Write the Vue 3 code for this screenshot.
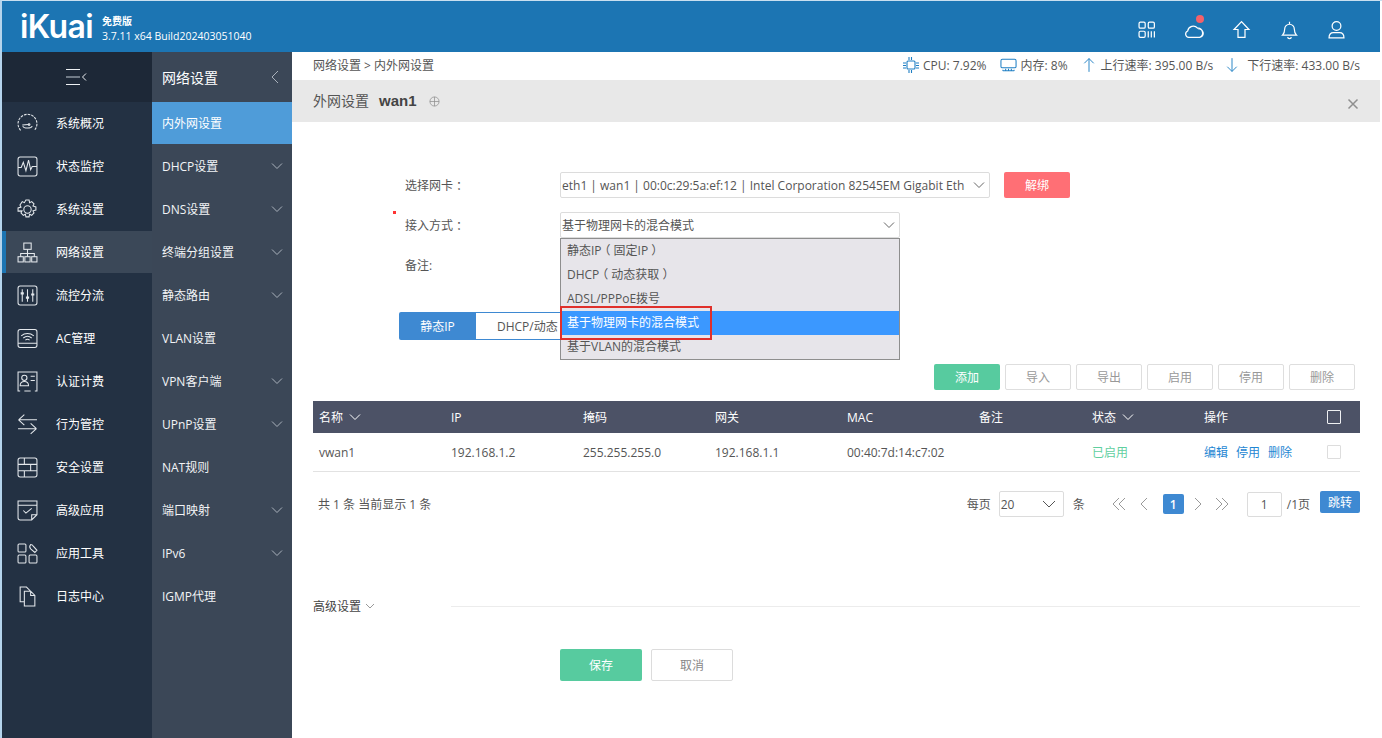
<script setup>
const mainMenu = [
  { t: '系统概况', i: 'gauge' }, { t: '状态监控', i: 'pulse' }, { t: '系统设置', i: 'gear' },
  { t: '网络设置', i: 'net', on: true }, { t: '流控分流', i: 'sliders' }, { t: 'AC管理', i: 'wifi' },
  { t: '认证计费', i: 'card' }, { t: '行为管控', i: 'swap' }, { t: '安全设置', i: 'wall' },
  { t: '高级应用', i: 'note' }, { t: '应用工具', i: 'tools' }, { t: '日志中心', i: 'doc' },
]
const subMenu = [
  { t: '内外网设置', on: true }, { t: 'DHCP设置', c: true }, { t: 'DNS设置', c: true }, { t: '终端分组设置', c: true },
  { t: '静态路由', c: true }, { t: 'VLAN设置' }, { t: 'VPN客户端', c: true }, { t: 'UPnP设置', c: true },
  { t: 'NAT规则' }, { t: '端口映射', c: true }, { t: 'IPv6', c: true }, { t: 'IGMP代理' },
]
const options = ['静态IP（固定IP）', 'DHCP（动态获取）', 'ADSL/PPPoE拨号', '基于物理网卡的混合模式', '基于VLAN的混合模式']
const tools = ['导入', '导出', '启用', '停用', '删除']
const cols = ['IP', '掩码', '网关', 'MAC', '备注']
const cells = ['192.168.1.2', '255.255.255.0', '192.168.1.1', '00:40:7d:14:c7:02', '']
const split = s => s.split(/([（）])/).filter(Boolean)
</script>

<template>
  <div class="frame">
    <header class="top">
      <div class="logo">iKuai</div>
      <div class="ver"><b>免费版</b><span>3.7.11 x64 Build202403051040</span></div>
      <div class="top-icons">
        <svg class="ti" viewBox="0 0 24 24"><rect x="3.500" y="3.500" width="7" height="7" rx="1.500"/><rect x="14" y="3.500" width="7" height="7" rx="1.500"/><rect x="3.500" y="14" width="7" height="7" rx="1.500"/><path d="M14 14v7M17.500 14v7M21 14v7"/></svg>
        <div class="cloud">
          <svg class="ti" viewBox="0 0 24 24"><path d="M5.500 21a3.800 3.800 0 0 1-1.300-7.300A6.500 6.500 0 0 1 15.500 10.500a4 4 0 0 1 .5 0A5.500 5.500 0 0 1 18 21zM16 11a6.500 6.500 0 0 1 6 5 5 5 0 0 1-4 5"/></svg>
          <i class="dot"></i>
        </div>
        <svg class="ti" viewBox="0 0 24 24"><path d="M12 3 3.500 12H8v9h8v-9h4.500z"/></svg>
        <svg class="ti" viewBox="0 0 24 24"><path d="M4 18.500h16c-2-2-2.500-3-2.500-7A5.500 5.500 0 0 0 6.500 11.500c0 4-.5 5-2.500 7zM12 3v3M10 20.500a2 2 0 0 0 4 0"/></svg>
        <svg class="ti" viewBox="0 0 24 24"><circle cx="12" cy="8" r="5"/><path d="M3.500 21.500c0-4 2-6 5-6h7c3 0 5 2 5 6z"/></svg>
      </div>
    </header>
    <div class="body">
      <nav class="nav1">
        <div class="fold">
          <svg width="24" height="18" viewBox="0 0 24 18"><path d="M1 1.500h14M1 16.500h14M21 5.500 17.500 9l3.500 3.500"/><path class="mid" d="M1 9h14"/></svg>
        </div>
        <div v-for="m in mainMenu" :key="m.t" class="n1" :class="{ on: m.on }">
          <svg class="ni" viewBox="0 0 20 20">
            <template v-if="m.i === 'gauge'"><path d="M3.500 16.500a9 9 0 1 1 13 0" stroke-dasharray="2.500 1"/><path d="M5 11.500l6-.5M5.500 12.500c1 2.500 8 2.500 9 0" /><circle cx="11.500" cy="11" r=".8"/></template>
            <template v-else-if="m.i === 'pulse'"><rect x="1" y="1" width="18" height="18" rx="2"/><path d="M1 11h3l2-5 2.500 8L11 4l2 9 1.500-3H19"/></template>
            <template v-else-if="m.i === 'gear'"><circle cx="10" cy="10" r="3.500"/><path d="M8.500 1h3l.5 2.500 2-1 2.200 2.200-1 2 2.800.8v3l-2.800.8 1 2-2.200 2.200-2-1-.5 2.500h-3l-.5-2.500-2 1-2.200-2.200 1-2L1 11.500v-3l2.800-.8-1-2L5 2.500l2 1z"/></template>
            <template v-else-if="m.i === 'net'"><rect x="6.500" y="1" width="7" height="6"/><path d="M10 7v4M3.500 14v-3h13v3M10 11v3"/><rect x="1" y="14" width="5" height="5"/><rect x="7.500" y="14" width="5" height="5"/><rect x="14" y="14" width="5" height="5"/></template>
            <template v-else-if="m.i === 'sliders'"><rect x="1" y="1" width="18" height="18" rx="2"/><path d="M5 4v12M10 4v12M15 4v12"/><path class="thick" d="M3.500 8h3M8.500 12h3M13.500 9h3"/></template>
            <template v-else-if="m.i === 'wifi'"><rect x="1" y="1.500" width="18" height="17" rx="2"/><path d="M1 14.500h18M4 7.500c3.500-3 8.500-3 12 0M6 9.500c2.500-2 5.500-2 8 0M8 11.500c1.200-1 2.800-1 4 0"/></template>
            <template v-else-if="m.i === 'card'"><path d="M3 19H1V1h18v18h-2M7 19h6"/><circle cx="7" cy="6.500" r="2.500"/><path d="M3 14c0-3 2-4 4-4s4 1 4 4zM13 5h4M13 9h4"/></template>
            <template v-else-if="m.i === 'swap'"><path d="M19 5.500H1.500M1.500 5.500 7 .5M1.500 5.500 7 10.500M1 14h17.500M18.500 14 13 9M18.500 14 13 19"/></template>
            <template v-else-if="m.i === 'wall'"><rect x="1" y="1" width="18" height="18" rx="2"/><path d="M1 7h18M1 13h18M7 1v6M13 7v6M7 13v6"/></template>
            <template v-else-if="m.i === 'note'"><path d="M14 19H3a2 2 0 0 1-2-2V1h18v13zM14 19v-5h5M1 5h18M6 10l2.500 2.500L14 8"/></template>
            <template v-else-if="m.i === 'tools'"><rect x="1" y="1" width="7.500" height="7.500" rx="1"/><rect x="1" y="11.500" width="7.500" height="7.500" rx="1"/><rect x="11.500" y="11.500" width="7.500" height="7.500" rx="1"/><path d="M13 1.500a3 3 0 0 0 0 4l4 3.500 2-2-3.500-4a3 3 0 0 0-2.500-1.500z"/></template>
            <template v-else><path d="M7 15H3V1h6l4 4M7 5h6l4 4v10H7zM13 5v4h4"/></template>
          </svg>
          <span>{{ m.t }}</span>
        </div>
      </nav>
      <nav class="nav2">
        <div class="sub-head">
          <span>网络设置</span>
          <svg width="10" height="16" viewBox="0 0 10 16"><path d="M8 2 2 8l6 6"/></svg>
        </div>
        <div v-for="s in subMenu" :key="s.t" class="n2" :class="{ on: s.on }">
          <span>{{ s.t }}</span>
          <svg v-if="s.c" width="12" height="8" viewBox="0 0 12 8"><path d="M1 1.500 6 6.500l5-5"/></svg>
        </div>
      </nav>
      <main class="main">
        <div class="crumbbar">
          <span class="crumb">网络设置 &gt; 内外网设置</span>
          <div class="stats">
            <svg class="si cpu" viewBox="0 0 18 18"><rect x="5" y="5" width="8" height="8" rx="1"/><path d="M1 7h3M1 9.500h3M1 12h3M14 7h3M14 9.500h3M14 12h3M7 1v3M9.500 1v3M7 14v3M9.500 14v3"/></svg>
            <span>CPU: 7.92%</span>
            <svg class="si mem" viewBox="0 0 18 18"><rect x="1" y="3" width="16" height="9" rx="1.500"/><path d="M3 15h12M3 15v-1M6 15v-2M9 15v-2M12 15v-2M15 15v-1"/></svg>
            <span>内存: 8%</span>
            <svg class="si up1" viewBox="0 0 14 18"><path d="M7 17V1.500M1.500 7 7 1.500 12.500 7"/></svg>
            <span>上行速率: 395.00 B/s</span>
            <svg class="si up2" viewBox="0 0 14 18"><path d="M7 1v15.500M1.500 11 7 16.500 12.500 11"/></svg>
            <span>下行速率: 433.00 B/s</span>
          </div>
        </div>
        <div class="title">
          <span class="tt">外网设置</span><b>wan1</b>
          <svg class="plus" viewBox="0 0 12 12"><circle cx="6" cy="6" r="5"/><path d="M1 6h10M6 1v10"/></svg>
          <svg class="close" viewBox="0 0 12 12"><path d="M1.500 1.500l9 9M10.500 1.500l-9 9"/></svg>
        </div>
        <div class="content">
          <section class="form">
            <div class="row r1">
              <label>选择网卡<span class="pr">：</span></label>
              <div class="sel sel-a">
                <span>eth1 | wan1 | 00:0c:29:5a:ef:12 | Intel Corporation 82545EM Gigabit Eth</span>
                <svg width="12" height="8" viewBox="0 0 12 8"><path d="M1 1.500 6 6.500l5-5"/></svg>
              </div>
              <button class="unbind">解绑</button>
            </div>
            <div class="row r2">
              <i class="req"></i>
              <label>接入方式<span class="pr">：</span></label>
              <div class="sel sel-b">
                <span>基于物理网卡的混合模式</span>
                <svg width="12" height="8" viewBox="0 0 12 8"><path d="M1 1.500 6 6.500l5-5"/></svg>
                <ul class="drop">
                  <li v-for="(o, i) in options" :key="o" :class="{ hi: i === 3 }"><span v-for="(p, j) in split(o)" :key="j" :class="{ pl: p === '（', pr: p === '）' }">{{ p }}</span></li>
                  <i class="mark"></i>
                </ul>
              </div>
            </div>
            <div class="row r3"><label>备注:</label></div>
            <div class="tabs">
              <div class="tab on">静态IP</div>
              <div class="tab">DHCP/动态</div>
            </div>
          </section>
          <div class="toolbar">
            <button class="add">添加</button>
            <button v-for="b in tools" :key="b" class="ghost">{{ b }}</button>
          </div>
          <div class="table">
            <div class="tr th">
              <div class="c">名称<svg width="12" height="8" viewBox="0 0 12 8"><path d="M1 1.500 6 6.500l5-5"/></svg></div>
              <div v-for="c in cols" :key="c" class="c">{{ c }}</div>
              <div class="c">状态<svg width="12" height="8" viewBox="0 0 12 8"><path d="M1 1.500 6 6.500l5-5"/></svg></div>
              <div class="c">操作</div>
              <div class="c ck"><i class="box white"></i></div>
            </div>
            <div class="tr td">
              <div class="c">vwan1</div>
              <div v-for="(c, i) in cells" :key="i" class="c">{{ c }}</div>
              <div class="c green">已启用</div>
              <div class="c links"><a>编辑</a><a>停用</a><a>删除</a></div>
              <div class="c ck"><i class="box"></i></div>
            </div>
          </div>
          <div class="pager">
            <span class="count">共 1 条 当前显示 1 条</span>
            <div class="pg">
              <span>每页</span>
              <div class="size">20<svg width="14" height="8" viewBox="0 0 14 8"><path d="M1 1 7 7l6-6"/></svg></div>
              <span class="tiao">条</span>
              <svg class="ar a1" viewBox="0 0 16 16"><path d="M8 2 2 8l6 6M14 2 8 8l6 6"/></svg>
              <svg class="ar a2" viewBox="0 0 10 16"><path d="M8 2 2 8l6 6"/></svg>
              <span class="cur">1</span>
              <svg class="ar a3" viewBox="0 0 10 16"><path d="M2 2l6 6-6 6"/></svg>
              <svg class="ar a4" viewBox="0 0 16 16"><path d="M2 2l6 6-6 6M8 2l6 6-6 6"/></svg>
              <span class="inp">1</span>
              <span class="pages">/1页</span>
              <button class="go">跳转</button>
            </div>
          </div>
          <div class="adv">
            <span>高级设置</span>
            <svg width="10" height="6" viewBox="0 0 10 6"><path d="M1 1l4 4 4-4"/></svg>
            <i class="line"></i>
          </div>
          <div class="actions">
            <button class="save">保存</button>
            <button class="cancel">取消</button>
          </div>
        </div>
      </main>
    </div>
  </div>
</template>

<style>
html, body { margin: 0; background: #fff; overflow: hidden; }
</style>

<style scoped>
* { box-sizing: border-box; }
.frame { width: 1382px; height: 738px; padding: 0 2px 0 0; border-left: 2px solid #b5d4ec; border-top: 1px solid #c9dff0; background: #fff; font-family: "Open Sans", "Noto Sans CJK SC", sans-serif; font-size: 12px; color: #555; display: flex; flex-direction: column; overflow: hidden; }
svg { fill: none; stroke: currentColor; flex: none; display: block; }
button { font: inherit; border: 0; padding: 0; }
.top { height: 51px; background: #1c75b3; color: #fff; display: flex; align-items: center; flex: none; }
.logo { font-family: "Inter", "Liberation Sans", sans-serif; font-size: 32px; font-weight: 600; letter-spacing: -.6px; margin-left: 18px; width: 82px; line-height: 34px; }
.ver { display: flex; flex-direction: column; font-size: 10.500px; line-height: 15px; margin-top: 4px; }
.ver b { font-weight: 700; font-size: 10px; }
.top-icons { margin-left: auto; display: flex; gap: 26.500px; margin-right: 33px; margin-top: 5px; align-items: center; }
.ti { width: 21px; height: 21px; stroke-width: 1.400; }
.cloud { position: relative; }
.dot { position: absolute; width: 8px; height: 8px; border-radius: 50%; background: #f4616a; top: -4px; right: 1px; }
.body { flex: 1; display: flex; min-height: 0; }
.nav1 { width: 150px; background: #233143; color: #fff; flex: none; }
.fold { height: 50px; background: #1d2837; display: flex; align-items: center; justify-content: center; color: #eef1f4; padding-right: 1px; }
.mid { stroke: #8d96a2; stroke-width: 1.500; }
.n1 { height: 42px; margin-bottom: 1px; display: flex; align-items: center; padding-left: 15px; }
.n1.on { background: #3b4858; box-shadow: inset 4px 0 0 #1c75b3; }
.n1 span { margin-left: 18px; }
.ni { width: 21px; height: 21px; stroke-width: 1; color: #e4e8ec; }
.thick { stroke-width: 2; }
.nav2 { width: 140px; background: #3b4757; color: #fff; flex: none; }
.sub-head { height: 50px; display: flex; align-items: center; justify-content: space-between; padding: 0 12px 0 10px; font-size: 14px; }
.sub-head svg { color: #a9b1bb; }
.n2 { height: 42px; margin-bottom: 1px; display: flex; align-items: center; justify-content: space-between; padding: 0 9px 0 10px; color: #f2f4f6; }
.n2 svg { color: #aab2bc; }
.n2.on { background: #4f9cd9; color: #fff; }
.main { flex: 1; background: #fff; display: flex; flex-direction: column; min-width: 0; }
.crumbbar { height: 28px; display: flex; align-items: center; justify-content: space-between; padding: 0 20px 2px 21px; flex: none; }
.stats { display: flex; align-items: center; }
.si { width: 18px; height: 18px; color: #1f7fc4; stroke-width: 1.100; }
.cpu { margin-right: 3px; }
.mem { width: 17px; margin-left: 13px; margin-right: 4px; }
.up1 { width: 12px; margin-left: 15px; margin-right: 6px; }
.up2 { width: 12px; margin-left: 13px; margin-right: 9px; }
.title { height: 42px; background: #e8e8e8; display: flex; align-items: center; padding: 0 21px 2px; position: relative; flex: none; }
.tt { font-size: 14px; }
.title b { margin-left: 10px; font-size: 15px; font-family: "Liberation Sans", sans-serif; color: #444; }
.plus { width: 11px; height: 11px; margin-left: 12px; margin-top: 2px; color: #8d8d8d; stroke-width: .8; }
.close { width: 12px; height: 12px; margin-left: auto; margin-top: 7px; color: #8f8f8f; stroke-width: 1.500; }
.content { flex: 1; padding: 0 20px 0 21px; position: relative; }
.form { height: 242px; position: relative; }
.row { display: flex; align-items: center; }
.row label { width: 247px; padding-left: 92px; flex: none; white-space: nowrap; }
.pl { display: inline-block; transform: translateX(-3px); }
.pr { display: inline-block; transform: translateX(3px); }
.r1 { padding-top: 49px; height: 77px; }
.r2 { margin-top: 13px; height: 26px; position: relative; }
.r3 { margin-top: 14px; height: 26px; }
.req { position: absolute; left: 80px; top: -1px; width: 3px; height: 3px; background: #f33; }
.sel { height: 26px; border: 1px solid #dcdcdc; border-radius: 2px; display: flex; align-items: center; position: relative; }
.sel-a { width: 430px; padding-left: 1px; white-space: nowrap; overflow: hidden; justify-content: space-between; }
.sel-a span { width: 411px; overflow: hidden; }
.sel-a svg, .sel-b svg { margin-right: 4px; color: #666; }
.sel-b { width: 340px; padding-left: 1px; justify-content: space-between; }
.unbind { width: 66px; height: 26px; background: #ff6f75; color: #fff; border-radius: 2px; margin-left: 14px; }
.drop { position: absolute; z-index: 2; left: -1px; top: 25px; width: 340px; margin: 0; padding: 0; list-style: none; background: #e7e5ea; border: 1px solid #8e8e8e; }
.drop li { height: 24px; line-height: 24px; padding-left: 6px; }
.drop li.hi { background: #3b98ff; color: #fff; }
.mark { position: absolute; left: -1px; top: 67px; width: 152px; height: 34px; border: 2px solid #e0302b; }
.tabs { position: absolute; left: 86px; top: 190px; display: flex; height: 28px; }
.tab { width: 77px; display: flex; align-items: center; justify-content: center; background: #3e89d2; color: #fff; border-radius: 2px 0 0 2px; }
.tab:not(.on) { width: 84px; justify-content: flex-start; padding-left: 21px; background: #fff; color: #555; border: 1px solid #3e89d2; border-left: 0; border-right: 0; border-radius: 0; white-space: nowrap; }
.toolbar { height: 37px; display: flex; justify-content: flex-end; gap: 5px; padding-right: 5px; }
.toolbar button { width: 66px; height: 26px; border-radius: 2px; }
.add { background: #57cb9f; color: #fff; }
.ghost { background: #fff; border: 1px solid #dedede !important; color: #999; }
.tr { display: grid; grid-template-columns: 132px 132px 132px 132px 132px 113px 112px 108px 1fr; align-items: center; }
.th { height: 32px; background: #4c5266; color: #fff; }
.td { height: 39px; border-bottom: 1px solid #e2e2e2; }
.c { padding-left: 6px; display: flex; align-items: center; gap: 6px; white-space: nowrap; }
.green { color: #5fcf9f; }
.links { gap: 8px; }
.links a { color: #1f87d3; }
.ck { padding-left: 21px; }
.box { width: 14px; height: 14px; border: 1px solid #ddd; border-radius: 1px; background: #fff; display: block; }
.box.white { background: transparent; border-color: #eef0f2; }
.pager { display: flex; justify-content: space-between; align-items: center; height: 36px; margin-top: 14px; padding-left: 5px; }
.pg { display: flex; align-items: center; position: relative; }
.size { width: 65px; height: 26px; border: 1px solid #dcdcdc; border-radius: 2px; margin-left: 8px; display: flex; align-items: center; justify-content: space-between; padding: 0 7px 0 1px; }
.tiao { margin-left: 9px; }
.ar { height: 16px; color: #999; }
.a1 { width: 16px; margin-left: 26px; }
.a2 { width: 10px; margin-left: 12px; }
.cur { width: 21px; height: 20px; background: #3e89d2; color: #fff; border-radius: 2px; margin-left: 14px; display: flex; align-items: center; justify-content: center; font-weight: 600; }
.a3 { width: 10px; margin-left: 9px; }
.a4 { width: 16px; margin-left: 11px; }
.inp { width: 35px; height: 25px; border: 1px solid #dcdcdc; border-radius: 2px; margin-left: 17px; display: flex; align-items: center; justify-content: center; }
.pages { margin-left: 5px; }
.go { width: 40px; height: 22px; background: #3e89d2; color: #fff; border-radius: 2px; margin-left: 10px; margin-top: -5px; }
.adv { display: flex; align-items: center; margin-top: 75px; height: 18px; color: #444; }
.adv svg { margin-left: 4px; color: #999; }
.line { flex: 1; height: 1px; background: #ececec; margin-left: 76px; }
.actions { display: flex; gap: 9px; padding-left: 247px; margin-top: 34px; }
.actions button { width: 82px; height: 32px; border-radius: 2px; }
.save { background: #57cb9f; color: #fff; }
.cancel { background: #fff; border: 1px solid #dcdcdc !important; color: #888; }
</style>
